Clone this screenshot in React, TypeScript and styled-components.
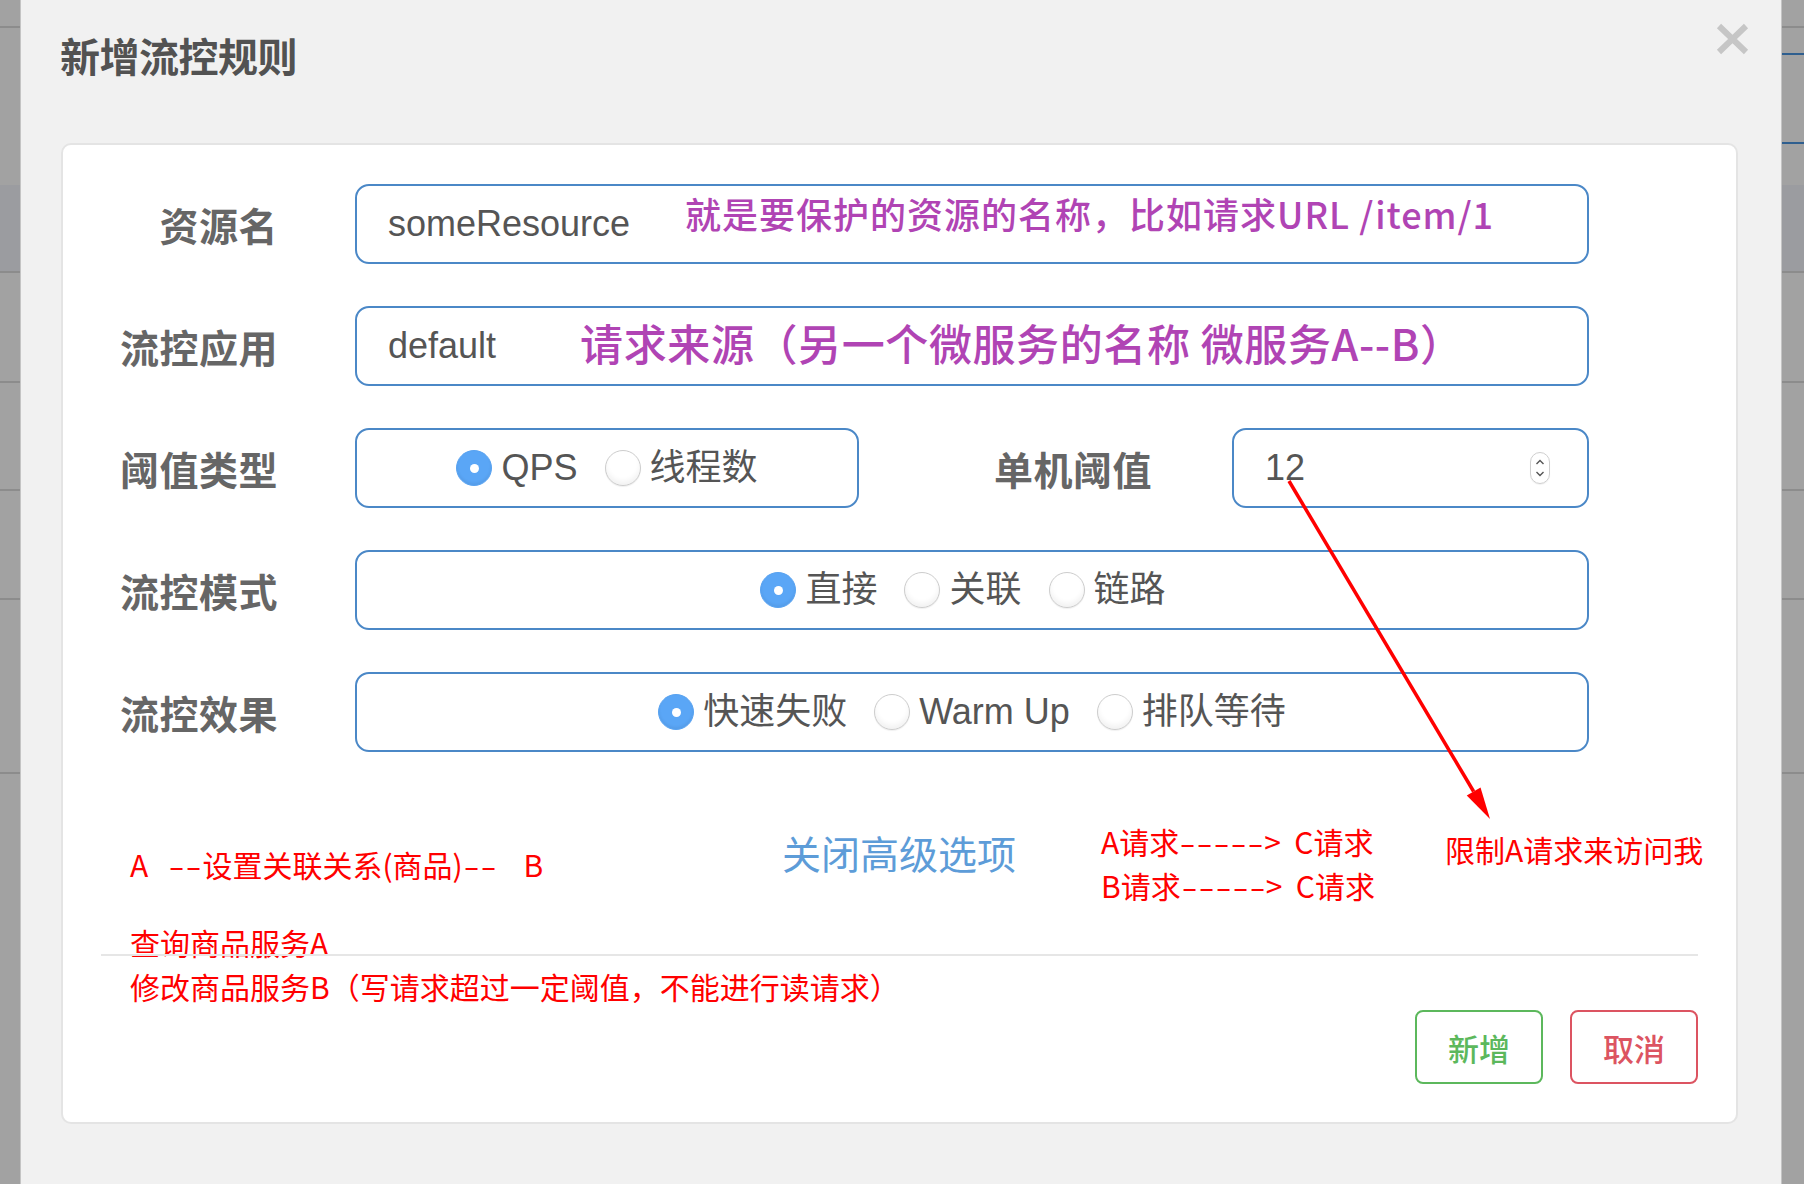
import React from "react";
import styled, { createGlobalStyle } from "styled-components";

const GlobalStyle = createGlobalStyle`
  html, body {
    margin: 0;
    padding: 0;
  }
  body {
    font-family: "Liberation Sans", "Noto Sans CJK SC", sans-serif;
    background: #a2a2a2;
  }
  * {
    box-sizing: border-box;
  }
`;

const Page = styled.div`
  position: relative;
  display: flex;
  width: 1804px;
  height: 1184px;
  overflow: hidden;
`;

const Side = styled.div<{ $w: number; $edge: "left" | "right" }>`
  width: ${(p) => p.$w}px;
  flex-shrink: 0;
  display: flex;
  flex-direction: column;
  background: #a2a2a2;
  border-${(p) => (p.$edge === "left" ? "right" : "left")}: 1px solid #c4c4c4;
`;

const Band = styled.div<{ $h: number; $line?: string; $tone?: string }>`
  height: ${(p) => p.$h}px;
  flex-shrink: 0;
  background: ${(p) => p.$tone || "transparent"};
  ${(p) => (p.$line ? `border-bottom: 2px solid ${p.$line};` : "")}
`;

const Dialog = styled.div`
  flex: 1;
  min-width: 0;
  display: flex;
  flex-direction: column;
  background: #f1f1f1;
`;

const Header = styled.div`
  height: 143px;
  display: flex;
  justify-content: space-between;
  align-items: flex-start;
  padding: 0 32px 0 39px;
`;

const Title = styled.h1`
  margin: 31px 0 0;
  font: 700 40px/48px "Noto Sans CJK SC", sans-serif;
  letter-spacing: -0.5px;
  color: #525252;
`;

const CloseButton = styled.button`
  margin-top: 23px;
  width: 33px;
  height: 32px;
  padding: 0;
  border: 0;
  background: none;
  display: flex;
`;

const Card = styled.div`
  margin: 0 43px 0 40px;
  height: 981px;
  background: #fff;
  border: 2px solid #e4e4e4;
  border-radius: 10px;
  padding: 39px 38px 0 38px;
  display: flex;
  flex-direction: column;
`;

const Form = styled.div`
  display: flex;
  flex-direction: column;
  gap: 42px;
`;

const FormRow = styled.div`
  display: grid;
  grid-template-columns: 254px 1234px;
  align-items: center;
  height: 80px;
`;

const SplitRow = styled.div`
  display: grid;
  grid-template-columns: 504px 373px 357px;
  align-items: center;
`;

const Label = styled.label<{ $pad?: number }>`
  text-align: right;
  padding-right: ${(p) => p.$pad ?? 77}px;
  font: 700 39px/1 "Noto Sans CJK SC", sans-serif;
  letter-spacing: 0.5px;
  color: #666;
`;

const Field = styled.div<{ $center?: boolean }>`
  height: 80px;
  display: flex;
  align-items: center;
  justify-content: ${(p) => (p.$center ? "center" : "flex-start")};
  padding: ${(p) => (p.$center ? "0 33px" : "0 37px 0 31px")};
  background: #fff;
  border: 2px solid #4b88c7;
  border-radius: 14px;
  font: 400 36px/1 "Liberation Sans", "Noto Sans CJK SC", sans-serif;
  color: #555;
`;

const NumberField = styled(Field)`
  justify-content: space-between;
`;

const Value = styled.span`
  white-space: pre;
`;

const Note = styled.span<{ $size: number; $gap: number; $lift: number; $track: number }>`
  margin-left: ${(p) => p.$gap}px;
  margin-bottom: ${(p) => p.$lift * 2}px;
  font: 500 ${(p) => p.$size}px/1.2 "Noto Sans CJK SC", sans-serif;
  letter-spacing: ${(p) => p.$track}px;
  color: #b044b4;
  white-space: pre;
`;

const Spinner = styled.span`
  width: 20px;
  height: 32px;
  border: 1px solid #cfcfcf;
  border-radius: 10px;
  display: flex;
  align-items: center;
  justify-content: center;
  box-shadow: 0 1px 1px rgba(0, 0, 0, 0.06);
`;

const RadioGroup = styled.div<{ $shift?: number }>`
  display: flex;
  align-items: center;
  gap: 27px;
  margin-right: ${(p) => p.$shift ?? 0}px;
`;

const Option = styled.span`
  display: flex;
  align-items: center;
  gap: 9px;
`;

const RadioDot = styled.span<{ $on?: boolean }>`
  position: relative;
  width: 36px;
  height: 36px;
  border-radius: 50%;
  flex-shrink: 0;
  background: ${(p) => (p.$on ? "#5aa6f6" : "#fff")};
  border: 1px solid ${(p) => (p.$on ? "#58a2f0" : "#cdcdcd")};
  box-shadow: ${(p) =>
    p.$on
      ? "inset 0 -2px 3px rgba(0,0,0,0.06)"
      : "inset 0 -4px 5px rgba(0,0,0,0.05), 0 1px 1px rgba(0,0,0,0.06)"};
  &::after {
    content: "";
    display: ${(p) => (p.$on ? "block" : "none")};
    position: absolute;
    left: 50%;
    top: 50%;
    width: 9px;
    height: 9px;
    margin: -4.5px 0 0 -4.5px;
    border-radius: 50%;
    background: #fff;
  }
`;

const AdvRow = styled.div`
  display: flex;
  align-items: flex-start;
  margin-top: 67px;
  padding-left: 29px;
`;

const Col = styled.div<{ $w?: number; $mt?: number }>`
  ${(p) => (p.$w ? `width: ${p.$w}px; flex-shrink: 0;` : "flex: 1; min-width: 0;")}
  margin-top: ${(p) => p.$mt ?? 0}px;
`;

const RedText = styled.div<{ $pl?: number; $mt?: number }>`
  padding-left: ${(p) => p.$pl ?? 0}px;
  margin-top: ${(p) => p.$mt ?? 0}px;
  font: 400 30px/44px "Noto Sans CJK SC", sans-serif;
  color: #ff0000;
  white-space: pre;
`;

// one long hyphen of the hand-typed "----->" runs
const Dash = styled.span`
  display: inline-block;
  width: 17px;
  text-align: center;
  transform: scaleX(1.55);
`;

const AdvLink = styled.a`
  font: 400 39px/48px "Noto Sans CJK SC", sans-serif;
  color: #5d9cd8;
  text-decoration: none;
  cursor: pointer;
`;

const Divider = styled.div`
  height: 2px;
  margin-top: -10px;
  background: #e6e6e6;
`;

const Footer = styled.div`
  display: flex;
  justify-content: flex-end;
  gap: 27px;
  margin-top: 2px;
`;

const Button = styled.button<{ $tone: string }>`
  width: 128px;
  height: 74px;
  background: #fff;
  border: 2px solid ${(p) => p.$tone};
  border-radius: 8px;
  color: ${(p) => p.$tone};
  font: 500 31px/1 "Noto Sans CJK SC", sans-serif;
  cursor: pointer;
`;

const Overlay = styled.svg`
  position: absolute;
  left: 0;
  top: 0;
  pointer-events: none;
`;

type BandSpec = { h: number; line?: string; tone?: string };

const leftBands: BandSpec[] = [
  { h: 28, line: "#8c8c8c" },
  { h: 157 },
  { h: 88, line: "#8c8c8c", tone: "#9b9ca0" },
  { h: 110, line: "#8c8c8c" },
  { h: 108, line: "#8c8c8c" },
  { h: 109, line: "#8c8c8c" },
  { h: 174, line: "#8c8c8c" },
];

const rightBands: BandSpec[] = [
  { h: 28, line: "#8c8c8c" },
  { h: 27, line: "#2f5f8f" },
  { h: 89, line: "#2f5f8f" },
  { h: 41 },
  { h: 88, line: "#8c8c8c", tone: "#9b9ca0" },
  { h: 110, line: "#8c8c8c" },
  { h: 108, line: "#8c8c8c" },
  { h: 109, line: "#8c8c8c" },
  { h: 174, line: "#8c8c8c" },
];

function Dashes({ n }: { n: number }) {
  return (
    <>
      {Array.from({ length: n }, (_, i) => (
        <Dash key={i}>-</Dash>
      ))}
    </>
  );
}

function Radio({ on, label }: { on?: boolean; label: string }) {
  return (
    <Option>
      <RadioDot $on={on} />
      <span>{label}</span>
    </Option>
  );
}

function Arrow() {
  // red pointer drawn on top of the screenshot
  const x1 = 1289, y1 = 481, tx = 1490, ty = 819;
  const dx = tx - x1, dy = ty - y1;
  const len = Math.hypot(dx, dy);
  const ux = dx / len, uy = dy / len;
  const bx = tx - ux * 32, by = ty - uy * 32;
  const nx = -uy * 8, ny = ux * 8;
  return (
    <Overlay width="1804" height="1184" viewBox="0 0 1804 1184">
      <line x1={x1} y1={y1} x2={bx} y2={by} stroke="#ff0000" strokeWidth="3.5" />
      <polygon
        points={`${tx},${ty} ${bx + nx},${by + ny} ${bx - nx},${by - ny}`}
        fill="#ff0000"
      />
    </Overlay>
  );
}

export default function App() {
  return (
    <Page>
      <GlobalStyle />
      <Side $w={21} $edge="left">
        {leftBands.map((b, i) => (
          <Band key={i} $h={b.h} $line={b.line} $tone={b.tone} />
        ))}
      </Side>
      <Dialog>
        <Header>
          <Title>新增流控规则</Title>
          <CloseButton aria-label="close">
            <svg width="33" height="32" viewBox="0 0 33 32">
              <path d="M3 3 L30 29 M30 3 L3 29" stroke="#c6c6c6" strokeWidth="6" />
            </svg>
          </CloseButton>
        </Header>
        <Card>
          <Form>
            <FormRow>
              <Label>资源名</Label>
              <Field>
                <Value>someResource</Value>
                <Note $size={36} $gap={55} $lift={10} $track={1}>
                  就是要保护的资源的名称，比如请求URL /item/1
                </Note>
              </Field>
            </FormRow>
            <FormRow>
              <Label>流控应用</Label>
              <Field>
                <Value>default</Value>
                <Note $size={43} $gap={84} $lift={3} $track={0.6}>
                  请求来源（另一个微服务的名称 微服务A--B）
                </Note>
              </Field>
            </FormRow>
            <FormRow>
              <Label>阈值类型</Label>
              <SplitRow>
                <Field $center>
                  <RadioGroup>
                    <Radio on label="QPS" />
                    <Radio label="线程数" />
                  </RadioGroup>
                </Field>
                <Label $pad={80}>单机阈值</Label>
                <NumberField>
                  <Value>12</Value>
                  <Spinner>
                    <svg width="12" height="24" viewBox="0 0 12 24">
                      <path
                        d="M2.5 8 L6 4.5 L9.5 8 M2.5 16 L6 19.5 L9.5 16"
                        stroke="#555"
                        strokeWidth="1.4"
                        fill="none"
                      />
                    </svg>
                  </Spinner>
                </NumberField>
              </SplitRow>
            </FormRow>
            <FormRow>
              <Label>流控模式</Label>
              <Field $center>
                <RadioGroup $shift={18}>
                  <Radio on label="直接" />
                  <Radio label="关联" />
                  <Radio label="链路" />
                </RadioGroup>
              </Field>
            </FormRow>
            <FormRow>
              <Label>流控效果</Label>
              <Field $center>
                <RadioGroup>
                  <Radio on label="快速失败" />
                  <Radio label="Warm Up" />
                  <Radio label="排队等待" />
                </RadioGroup>
              </Field>
            </FormRow>
          </Form>

          <AdvRow>
            <Col $w={652}>
              <RedText $mt={23}>
                {"A   "}
                <Dashes n={2} />
                {"设置关联关系(商品)"}
                <Dashes n={2} />
                {"    B"}
              </RedText>
            </Col>
            <Col $w={319} $mt={9}>
              <AdvLink>关闭高级选项</AdvLink>
            </Col>
            <Col $w={344}>
              <RedText>
                A请求<Dashes n={5} />
                {">  C请求"}
              </RedText>
              <RedText>
                B请求<Dashes n={5} />
                {">  C请求"}
              </RedText>
            </Col>
            <Col $mt={8}>
              <RedText>限制A请求来访问我</RedText>
            </Col>
          </AdvRow>

          <RedText $pl={29} $mt={13}>查询商品服务A</RedText>
          <Divider />
          <RedText $pl={29} $mt={8}>修改商品服务B（写请求超过一定阈值，不能进行读请求）</RedText>

          <Footer>
            <Button $tone="#5cb85c">新增</Button>
            <Button $tone="#dc5461">取消</Button>
          </Footer>
        </Card>
      </Dialog>
      <Side $w={23} $edge="right">
        {rightBands.map((b, i) => (
          <Band key={i} $h={b.h} $line={b.line} $tone={b.tone} />
        ))}
      </Side>
      <Arrow />
    </Page>
  );
}
